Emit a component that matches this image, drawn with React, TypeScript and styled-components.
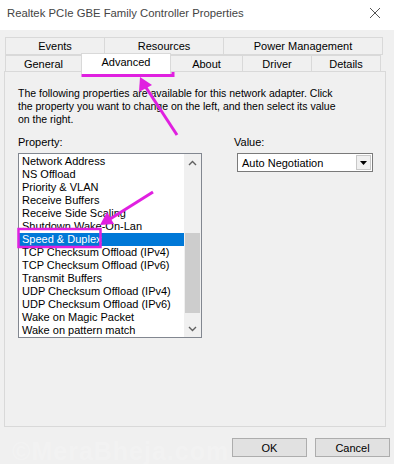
import styled, { createGlobalStyle } from "styled-components";

const GlobalStyle = createGlobalStyle`
  html, body {
    margin: 0;
    padding: 0;
    background: #f0f0f0;
    overflow: hidden;
  }
  * {
    box-sizing: border-box;
  }
`;

const topTabs = [
  { label: "Events", width: 100 },
  { label: "Resources", width: 120 },
  { label: "Power Management", width: 160 },
];

const bottomTabs = [
  { label: "General", width: 77 },
  { label: "Advanced", width: 90, active: true },
  { label: "About", width: 73 },
  { label: "Driver", width: 70 },
  { label: "Details", width: 70 },
];

const properties = [
  "Network Address",
  "NS Offload",
  "Priority & VLAN",
  "Receive Buffers",
  "Receive Side Scaling",
  "Shutdown Wake-On-Lan",
  "Speed & Duplex",
  "TCP Checksum Offload (IPv4)",
  "TCP Checksum Offload (IPv6)",
  "Transmit Buffers",
  "UDP Checksum Offload (IPv4)",
  "UDP Checksum Offload (IPv6)",
  "Wake on Magic Packet",
  "Wake on pattern match",
];

const Chevron = (props: { up?: boolean }) => (
  <svg width="9" height="6" viewBox="0 0 9 6">
    <path
      d={props.up ? "M1 5 L4.5 1.5 L8 5" : "M1 1 L4.5 4.5 L8 1"}
      fill="none"
      stroke="#606060"
      strokeWidth="1.4"
    />
  </svg>
);

export default function App() {
  return (
    <Window>
      <GlobalStyle />
      <TitleBar>
        <Title>Realtek PCIe GBE Family Controller Properties</Title>
        <CloseButton>
          <svg width="12" height="12" viewBox="0 0 12 12">
            <path d="M1 1 L11 11 M11 1 L1 11" stroke="#555" strokeWidth="1" />
          </svg>
        </CloseButton>
      </TitleBar>

      <Tabs>
        <TabRow>
          {topTabs.map((tab) => (
            <Tab key={tab.label} $width={tab.width} $height={18}>
              {tab.label}
            </Tab>
          ))}
        </TabRow>
        <TabRow>
          {bottomTabs.map((tab) => (
            <Tab
              key={tab.label}
              $width={tab.width}
              $height={17}
              $active={tab.active}
            >
              {tab.label}
            </Tab>
          ))}
        </TabRow>
      </Tabs>

      <Panel>
        <Description>
          The following properties are available for this network adapter. Click
          <br />
          the property you want to change on the left, and then select its value
          <br />
          on the right.
        </Description>

        <Fields>
          <Field>
            <Label>Property:</Label>
            <ListBox>
              <Items>
                {properties.map((item) => (
                  <Item key={item} $selected={item === "Speed & Duplex"}>
                    {item}
                  </Item>
                ))}
              </Items>
              <ScrollBar>
                <ScrollArrow>
                  <Chevron up />
                </ScrollArrow>
                <Track>
                  <Thumb />
                </Track>
                <ScrollArrow>
                  <Chevron />
                </ScrollArrow>
              </ScrollBar>
            </ListBox>
          </Field>

          <Field>
            <Label>Value:</Label>
            <Select>
              <SelectText>Auto Negotiation</SelectText>
              <SelectButton>
                <svg width="7" height="4" viewBox="0 0 7 4">
                  <path d="M0 0 H7 L3.5 4 Z" fill="#000" />
                </svg>
              </SelectButton>
            </Select>
          </Field>
        </Fields>
      </Panel>

      <Footer>
        <Button>OK</Button>
        <Button>Cancel</Button>
      </Footer>

      <Watermark>©MeraBheja.com</Watermark>

      <Annotations width="394" height="464" viewBox="0 0 394 464">
        <rect x="83" y="55.5" width="90" height="20" fill="none" stroke="#e020e0" strokeWidth="3" />
        <rect x="18.5" y="229" width="82" height="18" fill="none" stroke="#e020e0" strokeWidth="2.5" />
        <line x1="177" y1="135" x2="145" y2="86" stroke="#e020e0" strokeWidth="3" />
        <polygon points="140,77 139,92 152,85" fill="#e020e0" />
        <line x1="153" y1="192" x2="110" y2="219" stroke="#e020e0" strokeWidth="3" />
        <polygon points="100,225 107,212 114,224" fill="#e020e0" />
      </Annotations>
    </Window>
  );
}

const Window = styled.div`
  position: relative;
  width: 394px;
  height: 464px;
  background: #f0f0f0;
  font-family: "Liberation Sans", Arial, sans-serif;
  color: #000;
  display: flex;
  flex-direction: column;
  overflow: hidden;
`;

const TitleBar = styled.div`
  height: 30px;
  background: #ffffff;
  display: flex;
  align-items: center;
  justify-content: space-between;
  padding: 0 8px 4px 7px;
`;

const Title = styled.div`
  font-size: 11.3px;
  color: #444;
`;

const CloseButton = styled.div`
  display: flex;
  align-items: center;
  margin-right: 5px;
`;

const Tabs = styled.div`
  margin-top: 7px;
  padding-left: 5px;
  display: flex;
  flex-direction: column;
`;

const TabRow = styled.div`
  display: flex;
`;

const Tab = styled.div<{ $width: number; $height: number; $active?: boolean }>`
  width: ${(p) => p.$width}px;
  height: ${(p) => (p.$active ? p.$height + 4 : p.$height)}px;
  margin-top: ${(p) => (p.$active ? -2 : 0)}px;
  margin-bottom: ${(p) => (p.$active ? -2 : 0)}px;
  position: relative;
  z-index: ${(p) => (p.$active ? 2 : 1)};
  background: ${(p) => (p.$active ? "#ffffff" : "#f0f0f0")};
  border: 1px solid #d9d9d9;
  border-bottom: ${(p) => (p.$active ? "none" : "1px solid #d9d9d9")};
  margin-left: -1px;
  display: flex;
  align-items: ${(p) => (p.$active ? "flex-start" : "center")};
  padding-top: ${(p) => (p.$active ? 2 : 0)}px;
  justify-content: center;
  font-size: 11px;
  &:first-child {
    margin-left: 0;
  }
`;

const Panel = styled.div`
  margin: -1px 8px 0 4px;
  height: 356px;
  border: 1px solid #d9d9d9;
  background: #f0f0f0;
  padding: 15px 13px 0 13px;
`;

const Description = styled.p`
  margin: 0;
  font-size: 10.5px;
  line-height: 13px;
`;

const Fields = styled.div`
  margin-top: 10px;
  display: grid;
  grid-template-columns: 184px 139px;
  column-gap: 32px;
`;

const Field = styled.div`
  display: flex;
  flex-direction: column;
`;

const Label = styled.div`
  font-size: 11px;
  line-height: 13px;
  margin-bottom: 4px;
`;

const ListBox = styled.div`
  height: 185px;
  border: 1px solid #828790;
  background: #ffffff;
  display: flex;
  padding-top: 1px;
`;

const Items = styled.div`
  flex: 1;
  display: flex;
  flex-direction: column;
`;

const Item = styled.div<{ $selected?: boolean }>`
  height: 13px;
  line-height: 13px;
  padding-left: 3px;
  font-size: 11px;
  white-space: nowrap;
  background: ${(p) => (p.$selected ? "#0078d7" : "transparent")};
  color: ${(p) => (p.$selected ? "#ffffff" : "#000000")};
`;

const ScrollBar = styled.div`
  width: 17px;
  margin-top: -1px;
  background: #f0f0f0;
  display: flex;
  flex-direction: column;
`;

const ScrollArrow = styled.div`
  height: 17px;
  display: flex;
  align-items: center;
  justify-content: center;
`;

const Track = styled.div`
  flex: 1;
  display: flex;
  flex-direction: column;
`;

const Thumb = styled.div`
  margin: 62px 1px 0 1px;
  height: 80px;
  background: #cdcdcd;
`;

const Select = styled.div`
  margin-left: 3px;
  width: 136px;
  height: 19px;
  border: 1px solid #7a7a7a;
  background: #ffffff;
  display: flex;
  align-items: center;
  justify-content: space-between;
  padding: 1px;
`;

const SelectText = styled.div`
  font-size: 11px;
  padding-left: 3px;
`;

const SelectButton = styled.div`
  width: 15px;
  height: 15px;
  background: #f0f0f0;
  border: 1px solid #c8c8c8;
  display: flex;
  align-items: center;
  justify-content: center;
`;

const Footer = styled.div`
  display: flex;
  justify-content: flex-end;
  gap: 8px;
  padding: 11px 4px 0 0;
`;

const Button = styled.div`
  width: 75px;
  height: 19px;
  background: #e1e1e1;
  border: 1px solid #adadad;
  display: flex;
  align-items: center;
  justify-content: center;
  font-size: 11px;
`;

const Watermark = styled.div`
  position: absolute;
  left: 12px;
  top: 437px;
  font-size: 25px;
  font-weight: bold;
  letter-spacing: 1px;
  color: rgba(255, 255, 255, 0.2);
  pointer-events: none;
`;

const Annotations = styled.svg`
  position: absolute;
  left: 0;
  top: 0;
  pointer-events: none;
`;
